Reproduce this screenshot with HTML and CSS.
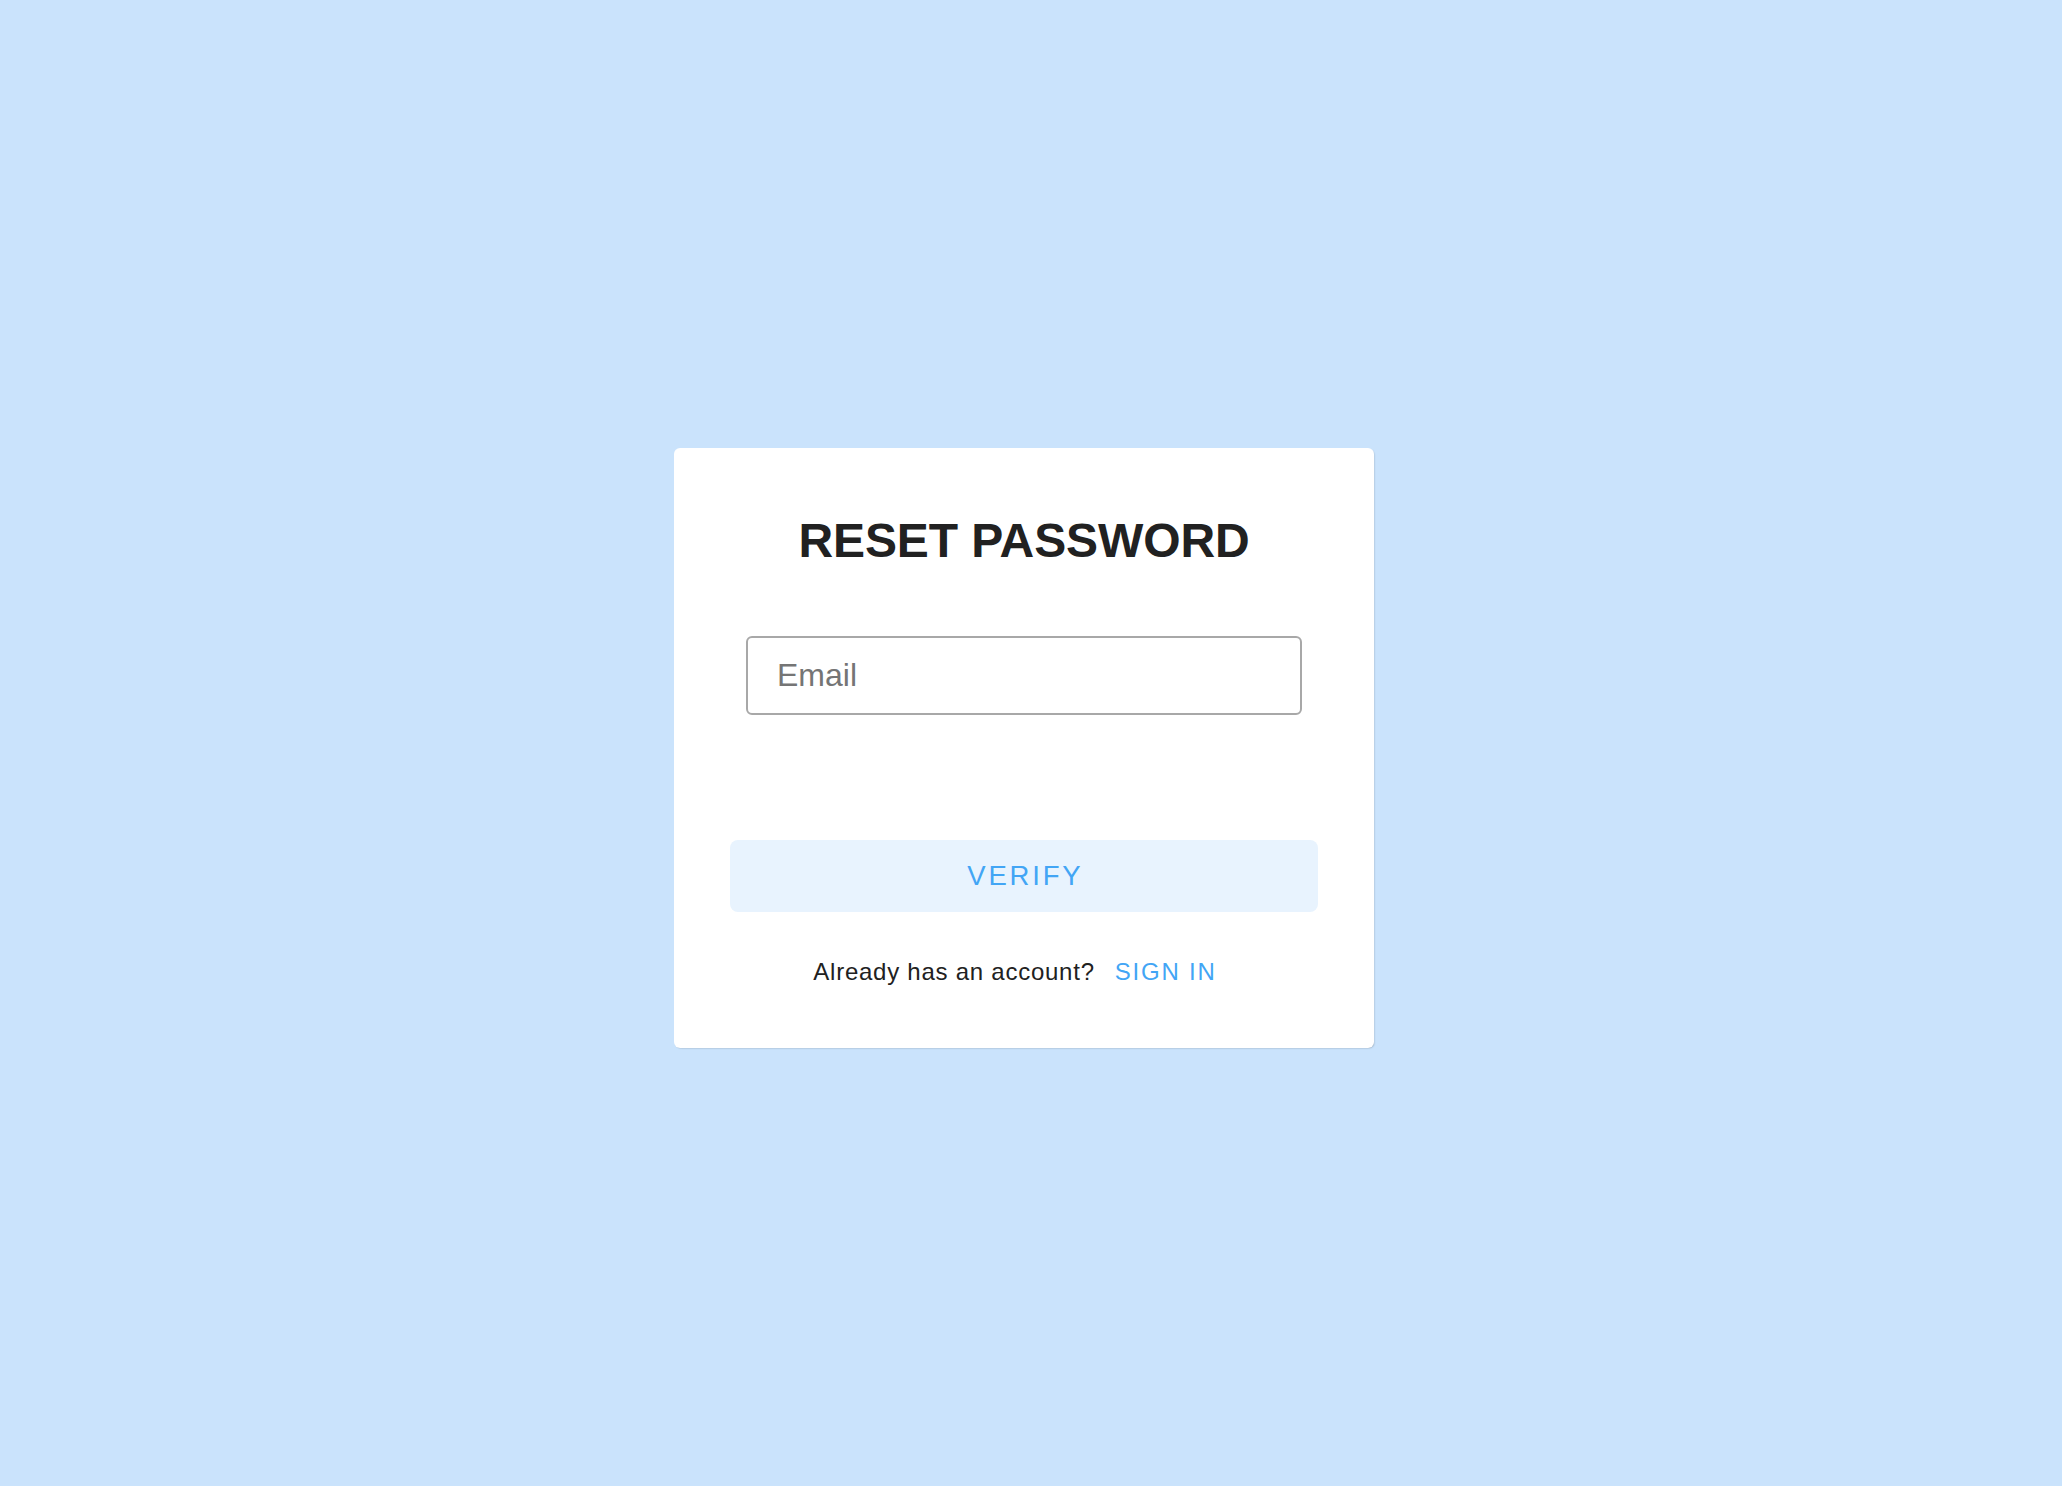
FILE: index.html
```html
<!DOCTYPE html>
<html lang="en">
<head>
<meta charset="utf-8">
<title>Reset Password</title>
<link rel="stylesheet" href="styles.css">
</head>
<body>
<main class="page">
  <section class="card">
    <h1 class="title">RESET PASSWORD</h1>
    <input class="field" type="email" placeholder="Email">
    <button class="verify" type="button">VERIFY</button>
    <div class="footer">
      <span class="footer-text">Already has an account?</span>
      <a class="signin" href="#">SIGN IN</a>
    </div>
  </section>
</main>
</body>
</html>
```

FILE: styles.css
```css
html, body {
  margin: 0;
  padding: 0;
}

body {
  background: #cae3fc;
  font-family: "Liberation Sans", Arial, Helvetica, sans-serif;
  color: #212121;
}

.page {
  min-height: 100vh;
  box-sizing: border-box;
  padding: 10px 14px 0 0;
  display: flex;
  align-items: center;
  justify-content: center;
}

.card {
  width: 700px;
  box-sizing: border-box;
  background: #ffffff;
  border-radius: 6px;
  padding: 63px 56px 58px;
  display: flex;
  flex-direction: column;
  align-items: stretch;
  box-shadow: 1px 1px 2px -1px rgba(0, 0, 0, 0.3), 0 1px 1px -1px rgba(0, 0, 0, 0.1);
}

.title {
  margin: 0;
  font-size: 48px;
  line-height: 60px;
  font-weight: 700;
  letter-spacing: -0.1px;
  text-align: center;
  color: #212121;
}

.field {
  margin: 65px 16px 0;
  height: 79px;
  box-sizing: border-box;
  border: 2px solid #a8a8a8;
  border-radius: 6px;
  padding: 0 29px;
  font-family: "Liberation Sans", Arial, Helvetica, sans-serif;
  font-size: 32px;
  color: #212121;
  background: #ffffff;
  outline: none;
}

.field::placeholder {
  color: #757575;
  opacity: 1;
}

.verify {
  margin-top: 125px;
  height: 72px;
  border: none;
  border-radius: 8px;
  background: #e8f3fe;
  color: #42a5f5;
  font-family: "Liberation Sans", Arial, Helvetica, sans-serif;
  font-size: 27.5px;
  letter-spacing: 2.8px;
  padding: 0 0 0 2.8px;
  cursor: pointer;
}

.footer {
  margin-top: 42px;
  height: 36px;
  display: flex;
  justify-content: center;
  align-items: center;
  gap: 2px;
  font-size: 24px;
  line-height: 36px;
}

.footer-text {
  letter-spacing: 0.75px;
  color: #212121;
}

.signin {
  padding: 0 18px;
  color: #42a5f5;
  text-decoration: none;
  letter-spacing: 1.8px;
}
```
